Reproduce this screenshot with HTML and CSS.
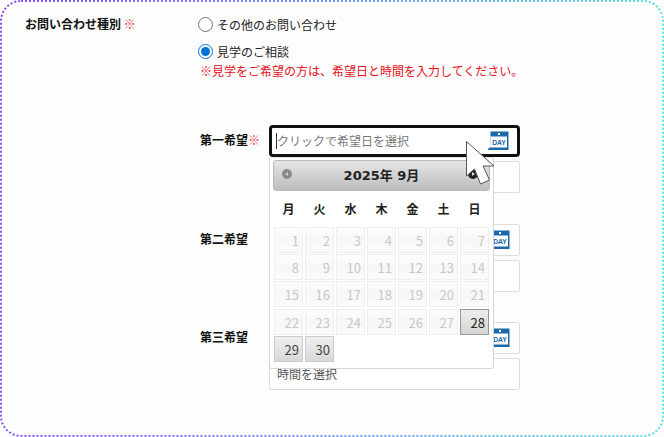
FILE: index.html
```html
<!DOCTYPE html>
<html lang="ja">
<head>
<meta charset="utf-8">
<title>お問い合わせ</title>
<link rel="stylesheet" href="styles.css">
</head>
<body>
<main class="frame">
  <svg class="dots" width="664" height="437" viewBox="0 0 664 437">
    <defs>
      <linearGradient id="edge" x1="0" x2="1" y1="0" y2="0">
        <stop offset="0" stop-color="#8a4dff"/>
        <stop offset="1" stop-color="#5fe3dc"/>
      </linearGradient>
    </defs>
    <rect x="1" y="1" width="662" height="435" rx="20" fill="none" stroke="url(#edge)" stroke-width="2" stroke-dasharray="2 2"/>
  </svg>
  <section class="form-row">
    <div class="form-label">お問い合わせ種別 <span class="req">※</span></div>
    <div class="form-body">
      <label class="radio-line"><input type="radio" name="kind"><span>その他のお問い合わせ</span></label>
      <label class="radio-line second"><input type="radio" name="kind" checked><span>見学のご相談</span></label>
      <p class="note">※見学をご希望の方は、希望日と時間を入力してください。</p>
      <div class="wishes">
        <div class="wish">
          <div class="wish-label">第一希望<span class="req">※</span></div>
          <div class="wish-fields">
            <div class="field focused">
              <span class="caret"></span><span class="placeholder">クリックで希望日を選択</span>
              <svg class="day-icon" viewBox="0 0 22 20">
                <path d="M3.500 0.500h18v18.500H0.500l3-4z" fill="#1b69a8"/>
                <path d="M3.500 5.500h16.500v11H2l1.500-2.500z" fill="#fff"/>
                <rect x="11" y="2" width="2" height="2" fill="#fff"/>
                <text x="12" y="13.500" text-anchor="middle" class="daytext">DAY</text>
              </svg>
            </div>
            <div class="field"></div>
            <div class="picker">
              <div class="picker-head">
                <span class="arrow prev"></span>
                <span class="month">2025年 9月</span>
                <span class="arrow next"></span>
              </div>
              <div class="weekdays"><span>月</span><span>火</span><span>水</span><span>木</span><span>金</span><span>土</span><span>日</span></div>
              <div class="days">
                <span>1</span><span>2</span><span>3</span><span>4</span><span>5</span><span>6</span><span>7</span>
                <span>8</span><span>9</span><span>10</span><span>11</span><span>12</span><span>13</span><span>14</span>
                <span>15</span><span>16</span><span>17</span><span>18</span><span>19</span><span>20</span><span>21</span>
                <span>22</span><span>23</span><span>24</span><span>25</span><span>26</span><span>27</span><span class="today">28</span>
                <span class="open">29</span><span class="open">30</span>
              </div>
            </div>
            <svg class="pointer" width="30" height="48" viewBox="0 0 30 48">
              <path d="M1.500 1.500V36l8-7 6 15 9-4-6.500-14H29z" fill="#fff" stroke="#555" stroke-width="1"/>
            </svg>
          </div>
        </div>
        <div class="wish">
          <div class="wish-label">第二希望</div>
          <div class="wish-fields">
            <div class="field">
              <svg class="day-icon" viewBox="0 0 22 20">
                <path d="M3.500 0.500h18v18.500H0.500l3-4z" fill="#1b69a8"/>
                <path d="M3.500 5.500h16.500v11H2l1.500-2.500z" fill="#fff"/>
                <rect x="11" y="2" width="2" height="2" fill="#fff"/>
                <text x="12" y="13.500" text-anchor="middle" class="daytext">DAY</text>
              </svg>
            </div>
            <div class="field"></div>
          </div>
        </div>
        <div class="wish">
          <div class="wish-label">第三希望</div>
          <div class="wish-fields">
            <div class="field">
              <svg class="day-icon" viewBox="0 0 22 20">
                <path d="M3.500 0.500h18v18.500H0.500l3-4z" fill="#1b69a8"/>
                <path d="M3.500 5.500h16.500v11H2l1.500-2.500z" fill="#fff"/>
                <rect x="11" y="2" width="2" height="2" fill="#fff"/>
                <text x="12" y="13.500" text-anchor="middle" class="daytext">DAY</text>
              </svg>
            </div>
            <div class="field time">時間を選択</div>
          </div>
        </div>
      </div>
    </div>
  </section>
</main>
</body>
</html>
```
FILE: styles.css
```css
* { box-sizing: border-box; }
html, body { margin: 0; padding: 0; background: #fff; }
body {
  width: 664px;
  height: 437px;
  overflow: hidden;
  font-family: "Noto Sans CJK JP", "Noto Sans", sans-serif;
  font-size: 12px;
  color: #222;
}
.frame {
  position: relative;
  width: 664px;
  height: 437px;
  background: #fdfdfd;
  padding: 15px 0 0 25px;
}
.dots { position: absolute; left: 0; top: 0; pointer-events: none; }
.form-row { display: flex; }
.form-label {
  width: 172px;
  flex: none;
  font-weight: 700;
  font-size: 12px;
  line-height: 17px;
  color: #111;
}
.req { color: #f0333f; font-weight: 400; }
.form-body { flex: 1; }
.radio-line { display: flex; align-items: center; height: 18px; gap: 4px; }
.radio-line input { width: 15px; height: 15px; margin: 0 0 0 1px; accent-color: #0075d6; }
.radio-line.second { margin-top: 9px; }
.note { margin: 2px 0 0 3px; color: #e8101c; line-height: 17px; height: 17px; }
.wishes { margin-top: 46px; display: flex; flex-direction: column; gap: 30.500px; margin-left: 3px; }
.wish { display: flex; }
.wish-label { width: 69px; flex: none; font-weight: 700; line-height: 30px; color: #111; }
.wish-fields { position: relative; width: 251px; display: flex; flex-direction: column; gap: 4px; }
.field {
  position: relative;
  height: 32px;
  border: 1px solid #ddd;
  background: #fff;
  padding-left: 7px;
  line-height: 30px;
  border-radius: 2px;
}
.field.focused { border: 3px solid #111; border-radius: 4px; display: flex; align-items: center; padding-left: 4px; }
.caret { width: 1px; height: 16px; background: #333; flex: none; }
.placeholder { color: #777; }
.day-icon { position: absolute; right: 9px; top: 5px; width: 22px; height: 20px; }
.focused .day-icon { right: 8px; top: 3px; }
.daytext { font: 700 6.800px "Liberation Sans", sans-serif; fill: #1b69a8; }
.field.time { color: #555; }
.picker {
  position: absolute;
  z-index: 5;
  left: 0;
  top: 32px;
  width: 225px;
  height: 212px;
  background: #fff;
  border: 1px solid #d6d6d6;
  border-top-color: #e4e4e4;
  border-radius: 3px;
  padding: 2px 3px;
}
.picker-head {
  height: 31px;
  display: flex;
  align-items: center;
  justify-content: center;
  position: relative;
  border: 1px solid #bbb;
  border-radius: 3px;
  padding-bottom: 2px;
  background: linear-gradient(#e6e6e6, #bdbdbd);
}
.month { font: 700 13px "DejaVu Sans", "Noto Sans CJK JP", sans-serif; color: #222; }
.arrow { position: absolute; top: 8px; width: 10px; height: 10px; border-radius: 50%; }
.arrow::after {
  content: "";
  position: absolute;
  top: 2.500px;
  border-style: solid;
  border-width: 2.500px 3px;
  border-color: transparent;
}
.prev { left: 8px; background: #8a8a8a; }
.prev::after { left: 0; border-right-color: #ccc; }
.next { right: 11px; background: #222; }
.next::after { right: 0; border-left-color: #ddd; }
.weekdays {
  display: grid;
  grid-template-columns: repeat(7, 31px);
  height: 34px;
  margin-bottom: 2px;
  align-items: center;
  justify-items: center;
  font-weight: 700;
  font-size: 12px;
  color: #222;
}
.days {
  display: grid;
  grid-template-columns: repeat(7, 29px);
  grid-auto-rows: 26px;
  column-gap: 2px;
  row-gap: 1.200px;
  margin-left: 1px;
}
.days span {
  border: 1px solid #eee;
  background: linear-gradient(#fdfdfd 0, #f7f7f7 50%, #fbfbfb 100%);
  color: #c8c8c8;
  font: 13px/25px "Noto Sans CJK JP", sans-serif;
  text-align: right;
  padding-right: 3px;
}
.days .today { border-color: #999; background: linear-gradient(#eee, #d4d4d4); color: #222; }
.days .open { border-color: #ccc; background: linear-gradient(#f0f0f0, #d8d8d8); color: #444; }
.pointer { position: absolute; z-index: 6; left: 196px; top: 15px; }
```
